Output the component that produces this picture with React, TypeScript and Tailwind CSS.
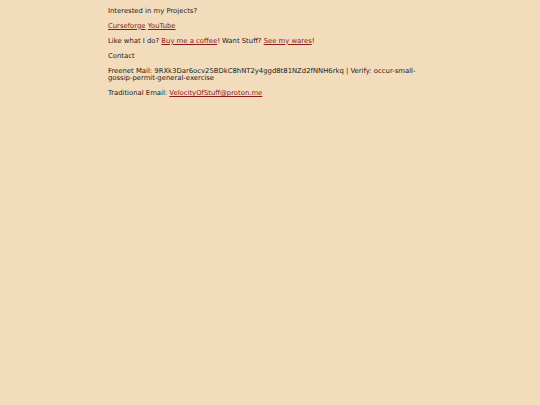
export default function App() {
  return (
    <div className="min-h-[405px] w-full bg-[#f3dcbc] text-[#222] font-['DejaVu_Sans',sans-serif] text-[6.85px] leading-[7.5px]">
      <div className="mx-auto w-[324px] pt-[7.5px] flex flex-col gap-[7.5px]">
        <p>Interested in my Projects?</p>
        <p>
          <a href="#" className="text-[#8b1a1a] underline">Curseforge</a>{" "}
          <a href="#" className="text-[#8b1a1a] underline">YouTube</a>
        </p>
        <p>
          Like what I do? <a href="#" className="text-[#8b1a1a] underline">Buy me a coffee</a>! Want Stuff?{" "}
          <a href="#" className="text-[#8b1a1a] underline">See my wares</a>!
        </p>
        <p>Contact</p>
        <p>
          Freenet Mail: 9RXk3Dar6ocv25BDkC8hNT2y4ggd8t81NZd2fNNH6rkq | Verify: occur-small-gossip-permit-general-exercise
        </p>
        <p>
          Traditional Email: <a href="#" className="text-[#8b1a1a] underline">VelocityOfStuff@proton.me</a>
        </p>
      </div>
    </div>
  );
}
